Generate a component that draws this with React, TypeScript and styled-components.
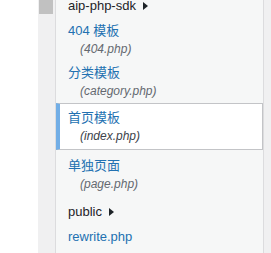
import React from 'react';
import styled, { createGlobalStyle } from 'styled-components';

const GlobalStyle = createGlobalStyle`
  html, body {
    margin: 0;
    padding: 0;
    background: #fff;
  }
  #root {
    width: 271px;
    height: 253px;
    overflow: hidden;
  }
`;

const Page = styled.div`
  display: flex;
  height: 253px;
  font-family: "Liberation Sans", "Noto Sans CJK SC", sans-serif;
  font-size: 13px;
  line-height: 18px;
`;

const EditorEdge = styled.div`
  width: 38px;
  background: #fff;
`;

const Scrollbar = styled.div`
  width: 17px;
  box-sizing: border-box;
  padding-left: 1px;
  background: #f0f0f1;
`;

const Thumb = styled.div`
  width: 14px;
  height: 14px;
  background: #c1c1c1;
`;

const Sidebar = styled.nav`
  width: 209px;
  box-sizing: border-box;
  background: #f6f7f7;
  border-left: 1px solid #dcdcde;
  border-right: 1px solid #dcdcde;
  overflow: hidden;
`;

const Gutter = styled.div`
  flex: 1;
  background: #f0f0f1;
`;

const Tree = styled.ul`
  list-style: none;
  margin: -6px 0 0;
  padding: 0;
`;

const Folder = styled.li<{ $gap?: number }>`
  display: flex;
  align-items: center;
  gap: 7px;
  margin-top: ${(p) => p.$gap ?? 0}px;
  padding: 3px 0 4px 12px;
  color: #1d2327;
`;

const Caret = styled.span`
  width: 0;
  height: 0;
  border-top: 4px solid transparent;
  border-bottom: 4px solid transparent;
  border-left: 5px solid #1d2327;
`;

const FileItem = styled.li``;

const FileLink = styled.a<{ $current?: boolean }>`
  display: block;
  padding: 3px 0 3px 12px;
  color: #2271b1;
  text-decoration: none;

  ${(p) =>
    p.$current &&
    `
    background: #fff;
    border: 1px solid #c3c4c7;
    border-left: 4px solid #72aee6;
    padding: 5px 0 4px 8px;
    margin-bottom: 4px;
  `}
`;

const FileName = styled.span`
  display: block;
`;

const Nonessential = styled.span<{ $current?: boolean }>`
  display: block;
  padding-left: 12px;
  font-size: 12px;
  font-style: italic;
  color: ${(p) => (p.$current ? '#3c434a' : '#646970')};
`;

interface TemplateFile {
  label: string;
  file: string;
  current?: boolean;
}

const templates: TemplateFile[] = [
  { label: '404 模板', file: '404.php' },
  { label: '分类模板', file: 'category.php' },
  { label: '首页模板', file: 'index.php', current: true },
  { label: '单独页面', file: 'page.php' },
];

const App: React.FC = () => {
  return (
    <>
      <GlobalStyle />
      <Page>
        <EditorEdge />
        <Scrollbar>
          <Thumb />
        </Scrollbar>
        <Sidebar>
          <Tree>
            <Folder>
              aip-php-sdk
              <Caret />
            </Folder>
            {templates.map((t) => (
              <FileItem key={t.file}>
                <FileLink href="#" $current={t.current}>
                  <FileName>{t.label}</FileName>
                  <Nonessential $current={t.current}>({t.file})</Nonessential>
                </FileLink>
              </FileItem>
            ))}
            <Folder $gap={4}>
              public
              <Caret />
            </Folder>
            <FileItem>
              <FileLink href="#">
                <FileName>rewrite.php</FileName>
              </FileLink>
            </FileItem>
          </Tree>
        </Sidebar>
        <Gutter />
      </Page>
    </>
  );
};

export default App;
